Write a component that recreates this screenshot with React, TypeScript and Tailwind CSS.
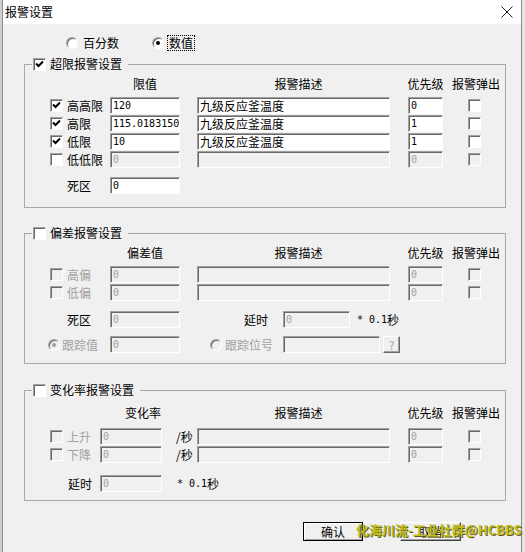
import clsx from "clsx";

const mono = "font-['DejaVu_Sans_Mono',monospace] text-[10px]";
const sunken =
  "border border-[#a0a0a0] border-b-white border-r-white shadow-[inset_1px_1px_0_#696969]";

function Check({ checked = false, disabled = false }: { checked?: boolean; disabled?: boolean }) {
  return (
    <span
      className={clsx(
        "flex h-[13px] w-[13px] shrink-0 items-center justify-center",
        sunken,
        disabled ? "bg-[#f0f0f0]" : "bg-white"
      )}
    >
      {checked && (
        <svg width="9" height="9" viewBox="0 0 9 9">
          <polyline points="1,3.5 3.5,6 8,1.5" fill="none" stroke="#000" strokeWidth="2" />
        </svg>
      )}
    </span>
  );
}

function Radio({ checked = false, disabled = false }: { checked?: boolean; disabled?: boolean }) {
  return (
    <span
      className={clsx(
        "flex h-[12px] w-[12px] shrink-0 items-center justify-center rounded-full",
        sunken,
        disabled ? "bg-[#f0f0f0]" : "bg-white"
      )}
    >
      {checked && (
        <span className={clsx("h-[4px] w-[4px] rounded-full", disabled ? "bg-[#a0a0a0]" : "bg-black")} />
      )}
    </span>
  );
}

function Field({
  value = "",
  className,
  disabled = false,
  cjk = false,
}: {
  value?: string;
  className?: string;
  disabled?: boolean;
  cjk?: boolean;
}) {
  return (
    <div
      className={clsx(
        "flex h-[17px] shrink-0 items-center overflow-hidden whitespace-nowrap pl-[2px]",
        sunken,
        disabled ? "bg-[#f0f0f0] text-[#a0a0a0]" : "bg-white text-black",
        cjk ? "text-[12px]" : mono,
        className
      )}
    >
      {value}
    </div>
  );
}

function Label({ text, className, disabled = false }: { text: string; className?: string; disabled?: boolean }) {
  return (
    <span className={clsx("shrink-0 whitespace-nowrap text-[12px]", disabled && "text-[#a0a0a0]", className)}>
      {text}
    </span>
  );
}

function Group({ title, checked = false, children, className }: { title: string; checked?: boolean; children: React.ReactNode; className?: string }) {
  return (
    <fieldset className={clsx("ml-[21px] w-[482px] border border-[#a8a8a8]", className)}>
      <legend className="ml-[7px] flex h-[16px] items-center pl-[1px] pr-[6px]">
        <Check checked={checked} />
        <span className="ml-[4px] text-[12px]">{title}</span>
      </legend>
      {children}
    </fieldset>
  );
}

function Seconds({ className }: { className?: string }) {
  return (
    <span className={clsx("flex shrink-0 items-center whitespace-nowrap", className)}>
      <span className={mono}>* 0.1</span>
      <span className="text-[12px]">秒</span>
    </span>
  );
}

function Header({ first, spacer }: { first: string; spacer: "limit" | "rate" }) {
  return (
    <div className="flex h-[16px] items-center text-[12px]">
      {spacer === "limit" ? (
        <>
          <span className="w-[85px] shrink-0" />
          <span className="flex w-[70px] shrink-0 justify-center">{first}</span>
          <span className="w-[17px] shrink-0" />
        </>
      ) : (
        <>
          <span className="w-[100px] shrink-0" />
          <span className="w-[72px] shrink-0">{first}</span>
        </>
      )}
      <span className="flex w-[193px] shrink-0 justify-center pl-[10px]">报警描述</span>
      <span className="ml-[18px] flex w-[35px] shrink-0 justify-center whitespace-nowrap">优先级</span>
      <span className="flex w-[62px] shrink-0 justify-center whitespace-nowrap pl-[4px]">报警弹出</span>
    </div>
  );
}

const limits = [
  { label: "高高限", on: true, value: "120", desc: "九级反应釜温度", pri: "0" },
  { label: "高限", on: true, value: "115.0183150", desc: "九级反应釜温度", pri: "1" },
  { label: "低限", on: true, value: "10", desc: "九级反应釜温度", pri: "1" },
  { label: "低低限", on: false, value: "0", desc: "", pri: "0" },
];

export default function App() {
  return (
    <div className="flex h-[552px] w-[525px] overflow-hidden bg-[#e4e4e4] font-['Noto_Sans_CJK_SC','Noto_Sans',sans-serif] leading-[16px] text-black">
      <div className="w-[2px] shrink-0 bg-[#cfcfcf]" />
      <div className="relative flex w-[520px] shrink-0 flex-col border-x border-[#8c8c8c] bg-[#f0f0f0]">
        {/* title bar */}
        <div className="flex h-[24px] shrink-0 items-center justify-between bg-white pl-[2px] pr-[8px]">
          <span className="text-[12px]">报警设置</span>
          <svg width="12" height="12" viewBox="0 0 12 12">
            <path d="M0.5 0.5L11.5 11.5M11.5 0.5L0.5 11.5" stroke="#222" strokeWidth="1" />
          </svg>
        </div>

        {/* value mode */}
        <div className="ml-[63px] mt-[11px] flex h-[16px] items-center text-[12px]">
          <Radio />
          <span className="ml-[5px]">百分数</span>
          <span className="ml-[33px]">
            <Radio checked />
          </span>
          <span className="ml-[3px] border border-dotted border-black px-[1px] leading-[14px]">数值</span>
        </div>

        {/* limit alarms */}
        <Group title="超限报警设置" checked className="mt-[5px] pb-[13px]">
          <div className="mt-[4px]">
            <Header first="限值" spacer="limit" />
          </div>
          <div className="mt-[5px] flex flex-col gap-[1px] pl-[25px]">
            {limits.map((r) => (
              <div key={r.label} className="flex h-[17px] items-center">
                <Check checked={r.on} />
                <Label text={r.label} className="ml-[4px] w-[43px]" />
                <Field value={r.value} disabled={!r.on} className="w-[70px]" />
                <Field value={r.desc} disabled={!r.on} cjk className="ml-[17px] w-[193px]" />
                <Field value={r.pri} disabled={!r.on} className="ml-[18px] w-[35px]" />
                <span className="flex w-[62px] shrink-0 justify-center">
                  <Check disabled={!r.on} />
                </span>
              </div>
            ))}
            <div className="mt-[8px] flex h-[17px] items-center">
              <Label text="死区" className="w-[60px] pl-[17px]" />
              <Field value="0" className="w-[70px]" />
            </div>
          </div>
        </Group>

        {/* deviation alarms */}
        <Group title="偏差报警设置" className="mt-[17px] pb-[10px]">
          <div className="mt-[4px]">
            <Header first="偏差值" spacer="limit" />
          </div>
          <div className="mt-[5px] flex flex-col gap-[1px] pl-[25px]">
            {["高偏", "低偏"].map((l) => (
              <div key={l} className="flex h-[17px] items-center">
                <Check disabled />
                <Label text={l} disabled className="ml-[4px] w-[43px]" />
                <Field value="0" disabled className="w-[70px]" />
                <Field disabled className="ml-[17px] w-[193px]" />
                <Field value="0" disabled className="ml-[18px] w-[35px]" />
                <span className="flex w-[62px] shrink-0 justify-center">
                  <Check disabled />
                </span>
              </div>
            ))}
            <div className="mt-[9px] flex h-[17px] items-center">
              <Label text="死区" className="w-[60px] pl-[17px]" />
              <Field value="0" disabled className="w-[70px]" />
              <Label text="延时" className="w-[88px] text-right" />
              <Field value="0" disabled className="ml-[15px] w-[67px]" />
              <Seconds className="ml-[7px]" />
            </div>
            <div className="mt-[7px] flex h-[17px] items-center">
              <span className="-ml-[2px]">
                <Radio checked disabled />
              </span>
              <Label text="跟踪值" disabled className="ml-[2px] w-[48px]" />
              <Field value="0" disabled className="w-[70px]" />
              <span className="ml-[30px]">
                <Radio disabled />
              </span>
              <Label text="跟踪位号" disabled className="ml-[3px] w-[58px]" />
              <Field disabled className="w-[97px]" />
              <span className="ml-[3px] flex h-[17px] w-[17px] shrink-0 items-center justify-center border border-white border-b-[#696969] border-r-[#696969] text-[11px] text-[#a0a0a0] shadow-[inset_-1px_-1px_0_#a0a0a0]">
                ?
              </span>
            </div>
          </div>
        </Group>

        {/* rate-of-change alarms */}
        <Group title="变化率报警设置" className="mt-[18px] pb-[8px]">
          <div className="mt-[7px]">
            <Header first="变化率" spacer="rate" />
          </div>
          <div className="mt-[7px] flex flex-col gap-[1px] pl-[25px]">
            {["上升", "下降"].map((l) => (
              <div key={l} className="flex h-[17px] items-center">
                <Check disabled />
                <Label text={l} disabled className="ml-[4px] w-[33px]" />
                <Field value="0" disabled className="w-[62px]" />
                <Label text="/秒" className="w-[35px] pl-[14px]" />
                <Field disabled className="w-[193px]" />
                <Field value="0" disabled className="ml-[18px] w-[35px]" />
                <span className="flex w-[62px] shrink-0 justify-center">
                  <Check disabled />
                </span>
              </div>
            ))}
            <div className="mt-[11px] flex h-[17px] items-center">
              <Label text="延时" className="w-[50px] pl-[18px]" />
              <Field value="0" disabled className="w-[62px]" />
              <Seconds className="ml-[15px]" />
            </div>
          </div>
        </Group>

        {/* buttons */}
        <div className="ml-[300px] mt-[21px] flex text-[12px]">
          <button className="flex h-[19px] w-[60px] items-center justify-center border border-black bg-[#f0f0f0] shadow-[inset_1px_1px_0_#fff,inset_-1px_-1px_0_#a0a0a0]">
            确认
          </button>
          <button className="ml-[37px] flex h-[19px] w-[61px] items-center justify-center border border-white border-b-[#404040] border-r-[#404040] bg-[#f0f0f0] shadow-[inset_-1px_-1px_0_#a0a0a0]">
            取消
          </button>
        </div>

        <span className="absolute left-[353px] top-[522px] whitespace-nowrap text-[13px] font-semibold text-[#c4bd1c] [text-shadow:1px_1px_0_#5f5d1a]">
          化海川流-工业社群@HCBBS
        </span>
      </div>
      <div className="w-[3px] shrink-0 bg-[#e6e6e6]" />
    </div>
  );
}
